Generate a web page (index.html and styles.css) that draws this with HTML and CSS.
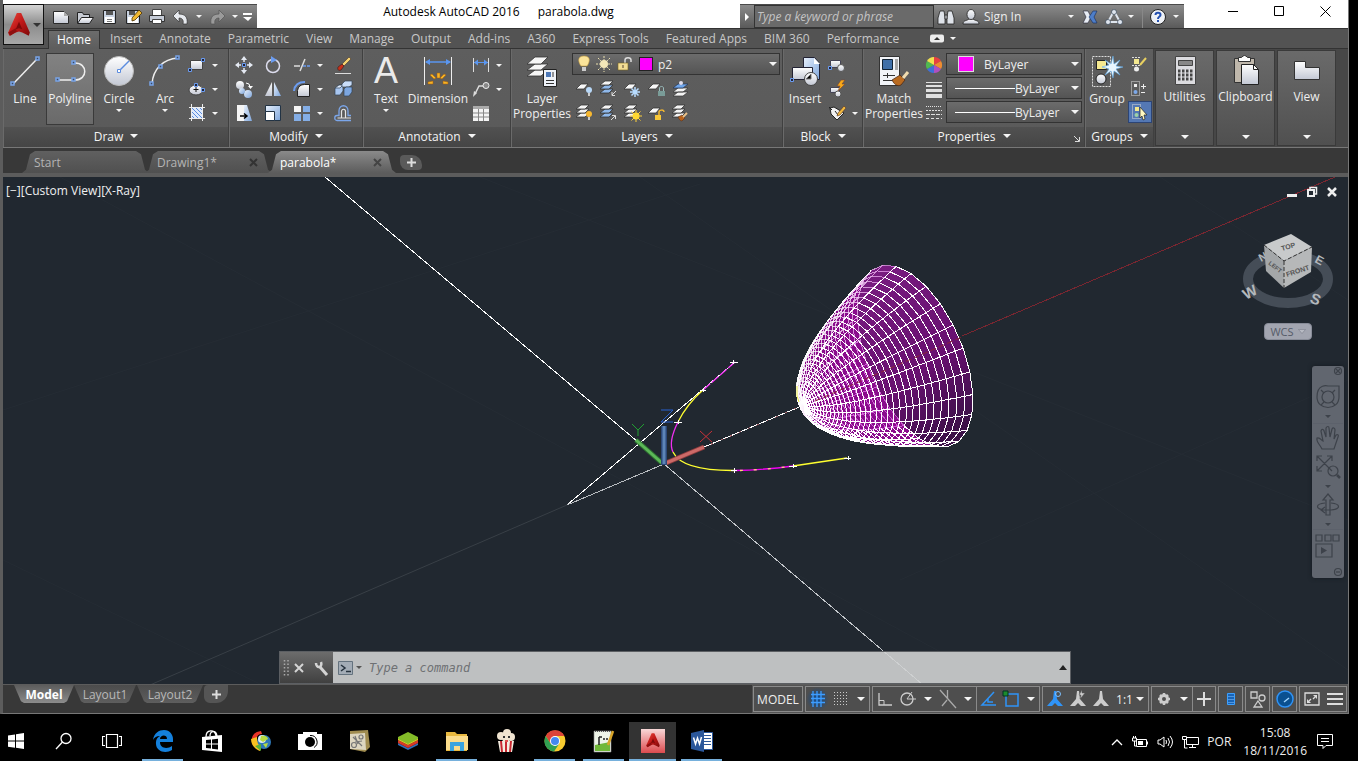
FILE: index.html
```html
<!DOCTYPE html>
<html lang="en">
<head>
<meta charset="utf-8">
<title>Autodesk AutoCAD 2016 - parabola.dwg</title>
<link rel="stylesheet" href="styles.css">
</head>
<body>
<svg class="defs" aria-hidden="true">
  <defs>
    <linearGradient id="steel" x1="0" y1="0" x2="0" y2="1"><stop offset="0" stop-color="#fff"/><stop offset="1" stop-color="#c3c8d4"/></linearGradient>
    <linearGradient id="ice" x1="0" y1="0" x2="1" y2="1"><stop offset="0" stop-color="#e8f0fb"/><stop offset="1" stop-color="#7ea6dc"/></linearGradient>
    <linearGradient id="ruby" x1="0" y1="0" x2="1" y2="1"><stop offset="0" stop-color="#e8483c"/><stop offset=".5" stop-color="#c01818"/><stop offset="1" stop-color="#7c0a0a"/></linearGradient>
    <linearGradient id="tile" x1="0" y1="0" x2="0" y2="1"><stop offset="0" stop-color="#f8d8d8"/><stop offset="1" stop-color="#dc4a4e"/></linearGradient>
    <linearGradient id="rimFill" x1=".2" y1="0" x2=".7" y2="1"><stop offset="0" stop-color="#781c80"/><stop offset=".6" stop-color="#681070"/><stop offset="1" stop-color="#3c1048"/></linearGradient>
    <linearGradient id="nearLine" gradientUnits="userSpaceOnUse" x1="825" y1="340" x2="868" y2="356"><stop offset="0" stop-color="#fff"/><stop offset="1" stop-color="#e070e6"/></linearGradient>
    <symbol id="stack" viewBox="0 0 20 20"><g fill="#f4f4f4" stroke="#333" stroke-width=".8"><path d="M1 14h9l4-4H6z"/><path d="M1 10h9l4-4H6z"/><path d="M1 6h9l4-4H6z"/></g></symbol>
    <symbol id="stackb" viewBox="0 0 20 20"><g fill="#f4f4f4" stroke="#333" stroke-width=".8"><path fill="#8fb8ea" d="M1 14h9l4-4H6z"/><path fill="#8fb8ea" d="M1 10h9l4-4H6z"/><path d="M1 6h9l4-4H6z"/></g></symbol>
    <symbol id="sheet" viewBox="0 0 20 20"><path fill="#f8f8f8" stroke="#333" stroke-width=".8" d="M1 10h8l4-5H6z"/></symbol>
    <symbol id="amark" viewBox="0 0 24 24"><path fill="url(#ruby)" d="M10 1h4l8 18-1 3-6-3-3-1-3 1-6 3-1-3z"/><path fill="#7c0a0a" d="M12 9l3 7-3-1-3 1z"/><path fill="#8e1010" d="M2 19l7-4 1 3-6 4z"/></symbol>
    <symbol id="figure" viewBox="0 0 20 20"><path d="M9 2h2l1 8 6 7h-5l-3-3-3 3H2l6-7z"/></symbol>
  </defs>
</svg>

<div class="window">
  <header class="titlebar">
    <button class="appbtn" aria-label="Application menu"><svg width="26" height="28" viewBox="0 0 24 24"><use href="#amark"/></svg><i class="arr dark"></i></button>
    <div class="quick">
      <button aria-label="New"><svg width="20" height="20" viewBox="0 0 20 20"><path fill="url(#steel)" stroke="#2a2a2a" d="M2.500 4.500h11l4 4v8h-15z"/><path fill="#aaa" d="M13 4v5h5z"/></svg></button>
      <button aria-label="Open"><svg width="20" height="20" viewBox="0 0 20 20"><path fill="#c8ccd4" stroke="#222" d="M2.500 16V5.500h5l1 2h6V10"/><path fill="url(#steel)" stroke="#222" d="M2.500 16.500l4-6h12l-4 6z"/></svg></button>
      <button aria-label="Save"><svg width="20" height="20" viewBox="0 0 20 20"><path fill="#c9d3e2" stroke="#222" d="M4.500 3.500h12v13h-12z"/><path fill="#555" d="M7 4h7v4H7z"/><path fill="#fff" d="M6 10h9v6H6z"/><path fill="#777" d="M8 12h5v1H8zM8 14h5v1H8z"/></svg></button>
      <button aria-label="Save as"><svg width="20" height="20" viewBox="0 0 20 20"><path fill="#c9d3e2" stroke="#222" d="M3.500 3.500h13v13h-13z"/><path fill="#555" d="M6 4h6v4H6z"/><path fill="#fff" d="M5 10h10v6H5z"/><path fill="#f0b830" stroke="#4a3000" stroke-width=".8" d="M16 3l3 3-7 7-3 1 0-3z"/></svg></button>
      <button aria-label="Plot"><svg width="20" height="20" viewBox="0 0 20 20"><path fill="#fff" stroke="#444" d="M5.500 2.500h9v6h-9z"/><path fill="#c5cbd6" stroke="#333" d="M2.500 8.500h15v6h-15z"/><path fill="#fff" stroke="#444" d="M5.500 12.500h9v4h-9z"/></svg></button>
      <button aria-label="Undo"><svg width="20" height="20" viewBox="0 0 20 20"><path fill="#e6e9ee" stroke="#333" stroke-width=".7" d="M2 9l6-6v4c6 0 9 3 8 10h-4c1-4-1-6-4-6v4z"/></svg></button>
      <button class="slim" aria-label="Undo list"><i class="arr"></i></button>
      <button aria-label="Redo"><svg width="20" height="20" viewBox="0 0 20 20"><path fill="#9a9a9a" stroke="#555" stroke-width=".7" d="M18 9l-6-6v4c-6 0-9 3-8 10h4c-1-4 1-6 4-6v4z"/></svg></button>
      <button class="slim" aria-label="Redo list"><i class="arr"></i></button>
      <button class="slim" aria-label="Customize"><svg width="12" height="12" viewBox="0 0 12 12"><path fill="#fff" d="M2 2h9v2H2zM2 6h9l-4 4z"/></svg></button>
    </div>
    <h1 class="title"><span>Autodesk AutoCAD 2016</span><span>parabola.dwg</span></h1>
    <div class="info">
      <button class="tiny" aria-label="Collapse search"><svg width="6" height="8" viewBox="0 0 6 8"><path fill="#fff" d="M1 0l4 4-4 4z"/></svg></button>
      <input class="search" type="text" placeholder="Type a keyword or phrase" aria-label="Search">
      <button class="w24" aria-label="Find"><svg width="20" height="20" viewBox="0 0 20 20"><g fill="#dfe3ea" stroke="#222" stroke-width=".8"><path d="M4 4h4l1 6v7H2v-6z"/><path d="M12 4h4l2 7v6h-7v-7z"/><path d="M9 8h2v4H9z"/></g></svg></button>
      <button class="signin"><svg width="18" height="20" viewBox="0 0 18 20"><g fill="url(#steel)" stroke="#222" stroke-width=".8"><path d="M1 17c0-4 4-3 6-5h4c2 2 6 1 6 5z"/><ellipse cx="9" cy="7.500" rx="4" ry="5"/></g></svg><span>Sign In</span><i class="arr"></i></button>
      <button class="w24" aria-label="Exchange"><svg width="20" height="20" viewBox="0 0 20 20"><path fill="#e8edf5" stroke="#223" stroke-width=".6" d="M3 4h5l3 6-3 6H3l3-6z"/><path fill="#4e7ec8" stroke="#122a5a" stroke-width=".6" d="M17 4h-4l-4 6 4 6h4l-3-6z"/></svg></button>
      <button class="a360" aria-label="Autodesk 360"><svg width="20" height="20" viewBox="0 0 20 20"><path fill="none" stroke="#dfe5ee" stroke-width="2" d="M10 4L4 15h12z"/><g fill="#dfe5ee" stroke="#234" stroke-width=".6"><circle cx="10" cy="5" r="2.500"/><circle cx="4" cy="15" r="2.500"/><circle cx="16" cy="15" r="2.500"/></g></svg><i class="arr"></i></button>
      <button class="help" aria-label="Help"><svg width="18" height="18" viewBox="0 0 18 18"><circle cx="9" cy="9" r="7.500" fill="#eef1f6" stroke="#222"/><path fill="none" stroke="#2450b0" stroke-width="2" d="M6.500 7c0-3 5-3 5 0 0 1.500-2.500 1.500-2.500 4"/><path fill="#2450b0" d="M8 12h2v2H8z"/></svg><i class="arr"></i></button>
    </div>
    <div class="winctl">
      <button aria-label="Minimize"><svg width="11" height="11" viewBox="0 0 11 11"><path stroke="#000" d="M0 5.500h10"/></svg></button>
      <button aria-label="Maximize"><svg width="11" height="11" viewBox="0 0 11 11"><path fill="none" stroke="#000" d="M.5.5h9v9h-9z"/></svg></button>
      <button aria-label="Close"><svg width="11" height="11" viewBox="0 0 11 11"><path stroke="#000" d="M.5.5l10 10M10.500.5l-10 10"/></svg></button>
    </div>
  </header>

  <nav class="tabs">
    <a class="on" href="#">Home</a><a href="#">Insert</a><a href="#">Annotate</a><a href="#">Parametric</a><a href="#">View</a><a href="#">Manage</a><a href="#">Output</a><a href="#">Add-ins</a><a href="#">A360</a><a href="#">Express Tools</a><a href="#">Featured Apps</a><a href="#">BIM 360</a><a href="#">Performance</a>
    <button class="minrib" aria-label="Minimize ribbon"><svg width="14" height="9" viewBox="0 0 14 9"><rect width="14" height="8" y=".5" rx="2" fill="#eee"/><path fill="#333" d="M4 6l3-3 3 3z"/></svg><i class="arr"></i></button>
  </nav>

  <div class="ribbon">
    <section class="panel p-draw">
      <div class="tools">
        <button class="big w42"><svg width="32" height="32" viewBox="0 0 32 32"><path stroke="#eee" stroke-width="1.500" d="M4 29L28 4"/><g fill="#3c4a60" stroke="#78a4e8" stroke-width="1.500"><path d="M2 27h3v3H2zM27 2h3v3h-3z"/></g></svg>Line</button>
        <button class="big w48 on"><svg width="32" height="32" viewBox="0 0 32 32"><path fill="none" stroke="#eee" stroke-width="1.500" d="M3 25h18c13 0 13-17 0-17"/><g fill="#3c4a60" stroke="#78a4e8" stroke-width="1.500"><path d="M2 23h3v3H2zM18 23h3v3h-3zM18 6h3v3h-3z"/></g></svg>Polyline</button>
        <button class="big w50"><svg width="32" height="32" viewBox="0 0 32 32"><circle cx="16" cy="16" r="14.500" fill="url(#steel)" stroke="#bbb"/><path stroke="#5a8ce0" stroke-width="1.500" d="M16 16L26 6"/><path fill="#fff" stroke="#5a8ce0" d="M14.500 14.500h3v3h-3z"/></svg>Circle<i class="arr"></i></button>
        <button class="big w42"><svg width="32" height="32" viewBox="0 0 32 32"><path fill="none" stroke="#eee" stroke-width="1.500" d="M3 29C4 14 14 4 29 3"/><g fill="#3c4a60" stroke="#78a4e8" stroke-width="1.500"><path d="M1 27h3v3H1zM10 10h3v3h-3zM27 1h3v3h-3z"/></g></svg>Arc<i class="arr"></i></button>
        <div class="col">
          <button class="sm dd" aria-label="Rectangle"><svg width="20" height="20" viewBox="0 0 20 20"><path fill="url(#steel)" stroke="#444" d="M3.500 5.500h12v9h-12z"/><path fill="#223" stroke="#6b9cf0" d="M1.500 13.500h3v3h-3zM14.500 3.500h3v3h-3z"/></svg><i class="arr"></i></button>
          <button class="sm dd" aria-label="Ellipse"><svg width="20" height="20" viewBox="0 0 20 20"><ellipse cx="9" cy="11" rx="7" ry="5" fill="url(#steel)" stroke="#444"/><path stroke="#111" d="M9 8v5M6.500 10.500h5"/><path fill="#223" stroke="#6b9cf0" d="M7.500 4.500h3v3h-3zM14.500 9.500h3v3h-3z"/></svg><i class="arr"></i></button>
          <button class="sm dd" aria-label="Hatch"><svg width="20" height="20" viewBox="0 0 20 20"><path fill="#dfeafc" d="M4 4h11v11H4z"/><path stroke="#5a8cdc" d="M4 8l7 7M4 4l11 11M8 4l7 7M4 12l3 3M12 4l3 3"/><path stroke="#eee" fill="none" d="M4.500 1v17M15.500 1v17M2 4.500h16M2 15.500h16"/></svg><i class="arr"></i></button>
        </div>
      </div>
      <button class="foot">Draw<i class="arr lg"></i></button>
    </section>

    <section class="panel p-modify">
      <div class="tools">
        <div class="grid4">
          <button class="sm" aria-label="Move"><svg width="20" height="20" viewBox="0 0 20 20"><path fill="#e4e9f2" d="M10 1l3 4H7zM10 19l3-4H7zM1 10l4-3v6zM19 10l-4-3v6z"/><path stroke="#e4e9f2" stroke-width="1.500" d="M10 4v3M10 13v3M4 10h3M13 10h3"/><path fill="#223" stroke="#6b9cf0" d="M8.500 8.500h3v3h-3z"/></svg></button>
          <button class="sm" aria-label="Rotate"><svg width="20" height="20" viewBox="0 0 20 20"><circle cx="10" cy="11" r="6.500" fill="none" stroke="#dde" stroke-width="1.500"/><path fill="#6b9cf0" d="M8 1l6 4-6 3z"/></svg></button>
          <button class="sm dd" aria-label="Trim"><svg width="20" height="20" viewBox="0 0 20 20"><path stroke="#ddd" stroke-width="1.500" d="M2 11h6M8 16l5-12"/><path stroke="#6b9cf0" stroke-width="1.500" stroke-dasharray="3 1" d="M11 11h8"/></svg><i class="arr"></i></button>
          <button class="sm" aria-label="Erase"><svg width="20" height="20" viewBox="0 0 20 20"><path stroke="#ddd" d="M2 18.500h16"/><path fill="#f4d070" stroke="#543" stroke-width=".7" d="M9 9l7-7 2 2-7 7z"/><path fill="#c83018" stroke="#422" stroke-width=".7" d="M5 12l4-3 2 2-3 4c-2 1-4 0-3-3z"/></svg></button>
          <button class="sm" aria-label="Copy"><svg width="20" height="20" viewBox="0 0 20 20"><circle cx="6" cy="6" r="4" fill="url(#steel)"/><circle cx="14" cy="15" r="4" fill="url(#ice)"/><circle cx="8" cy="12" r="3" fill="url(#ice)"/><path fill="none" stroke="#fff" d="M12 4q4 0 4 4"/><path fill="#fff" d="M14 7h5l-2.500 3z"/></svg></button>
          <button class="sm" aria-label="Mirror"><svg width="20" height="20" viewBox="0 0 20 20"><path fill="url(#steel)" d="M9 3v14H2z"/><path fill="url(#ice)" d="M11 3v14h7z"/></svg></button>
          <button class="sm dd" aria-label="Fillet"><svg width="20" height="20" viewBox="0 0 20 20"><path fill="url(#steel)" stroke="#222" d="M5.500 17.500v-6q1-6 7-6h5v12z"/><path fill="none" stroke="#6b9cf0" stroke-width="2" d="M2 12Q3 3 13 3"/></svg><i class="arr"></i></button>
          <button class="sm" aria-label="Explode"><svg width="20" height="20" viewBox="0 0 20 20"><g stroke="#345" stroke-width=".7"><path fill="#a8c6f0" d="M2 9l4-3h4v6l-3 4H2z"/><path fill="#dce8fa" d="M2 9l4-3h4l-3 3z"/><path fill="#c8dcf8" d="M9 5l3-3h7v4l-3 2H9z"/><path fill="#7ca6e0" d="M11 10l2-2h6v5l-3 4h-5z"/></g></svg></button>
          <button class="sm" aria-label="Stretch"><svg width="20" height="20" viewBox="0 0 20 20"><path fill="#f4f4f4" d="M3 2h7v16H3z"/><path fill="url(#ice)" d="M10 2h3l5 16h-8z"/><path fill="none" stroke="#000" stroke-width="1.500" d="M6 13h6M10 10.500l3 2.500-3 2.500"/></svg></button>
          <button class="sm" aria-label="Scale"><svg width="20" height="20" viewBox="0 0 20 20"><path fill="url(#ice)" stroke="#234" d="M2.500 2.500h15v15h-15z"/><path fill="#fff" stroke="#234" d="M2.500 8.500h9v9h-9z"/></svg></button>
          <button class="sm dd" aria-label="Array"><svg width="20" height="20" viewBox="0 0 20 20"><path fill="#f4f4f4" d="M2 3h7v6H2z"/><path fill="#84aee6" d="M11 3h7v6h-7zM2 11h7v7H2zM11 11h7v7h-7z"/></svg><i class="arr"></i></button>
          <button class="sm" aria-label="Offset"><svg width="20" height="20" viewBox="0 0 20 20"><path fill="none" stroke="#7ba6ea" stroke-width="1.300" d="M18 17.500H4c-3 0-3-5 0-5h2V8c0-7 9-7 9 0v4.500h3"/><path fill="none" stroke="#e4e4e4" stroke-width="1.200" d="M18 15H4.500M8.500 15V8.500c0-3 4-3 4 0V15"/></svg></button>
        </div>
      </div>
      <button class="foot">Modify<i class="arr lg"></i></button>
    </section>

    <section class="panel p-annot">
      <div class="tools">
        <button class="big w44"><span class="glyph">A</span>Text<i class="arr"></i></button>
        <button class="big w60"><svg width="32" height="32" viewBox="0 0 32 32"><path stroke="#eee" d="M2.500 2v28M29.500 2v28"/><path stroke="#5a96f0" stroke-width="1.500" d="M4 7h24"/><path fill="#5a96f0" d="M3 7l5-3v6zM29 7l-5-3v6z"/><g fill="#f5b428" stroke="#a85a00" stroke-width=".5"><path d="M15 18h3v5h-3zM8 20l2-1 4 4-2 1zM24 20l-2-1-4 4 2 1zM6 27l5-1v3H6zM26 27l-5-1v3h5z"/></g></svg>Dimension</button>
        <div class="col">
          <button class="sm dd" aria-label="Linear"><svg width="20" height="20" viewBox="0 0 20 20"><path stroke="#ddd" d="M2.500 3v14M17.500 3v14"/><path stroke="#5a96f0" d="M3 7.500h14"/><path fill="#5a96f0" d="M3 7.500l4-3v6zM17 7.500l-4-3v6z"/></svg><i class="arr"></i></button>
          <button class="sm dd" aria-label="Leader"><svg width="20" height="20" viewBox="0 0 20 20"><path fill="none" stroke="#ddd" stroke-width="1.500" d="M4 15L8 7h5"/><path fill="#ddd" d="M2 18l1-6 3 2z"/><circle cx="15" cy="6.500" r="3" fill="#888" stroke="#eee"/></svg><i class="arr"></i></button>
          <button class="sm" aria-label="Table"><svg width="20" height="20" viewBox="0 0 20 20"><path fill="#f4f4f4" d="M2 3h16v15H2z"/><path fill="#aaa" d="M2 3h16v3H2z"/><path stroke="#888" d="M2 10h16M2 14h16M7.500 6v12M12.500 6v12"/></svg></button>
        </div>
      </div>
      <button class="foot">Annotation<i class="arr lg"></i></button>
    </section>

    <section class="panel p-layers">
      <div class="tools">
        <button class="big w60"><svg width="32" height="32" viewBox="0 0 32 32"><g fill="#f6f6f6" stroke="#333" stroke-width=".8"><path d="M1 21h14l7-6H9z"/><path d="M1 15h14l7-6H9z"/><path d="M1 9h14l7-7H9z"/></g><path fill="#eef2f8" stroke="#222" d="M17.500 14.500h13v17h-13z"/><path fill="#4c78b8" d="M20 17h5v5h-5z"/><path stroke="#333" d="M20 25.500h8M20 28.500h8M27 17v5"/></svg>Layer<br>Properties</button>
        <div class="layercol">
          <div class="combo layer">
            <svg width="14" height="18" viewBox="0 0 14 18"><path fill="#fbe49a" stroke="#c8a040" stroke-width=".6" d="M7 1c7 0 6 6 3 10H4C1 7 0 1 7 1z"/><path fill="#ccc" d="M5 12h4v4H5z"/></svg>
            <svg width="16" height="16" viewBox="0 0 16 16"><path stroke="#eadfae" stroke-dasharray="2 1" d="M8 0v16M0 8h16M2 2l12 12M14 2L2 14"/><circle cx="8" cy="8" r="4" fill="#f4e8b8"/></svg>
            <svg width="16" height="16" viewBox="0 0 16 16"><path fill="none" stroke="#ddd" stroke-width="1.500" d="M8 7V4c0-3 6-3 6 0v2"/><path fill="#f4de94" stroke="#7a6420" stroke-width=".6" d="M1 7h10v7H1z"/><path stroke="#543" d="M6 9v3"/></svg>
            <i class="swatch"></i>
            <select aria-label="Layer"><option>p2</option></select><i class="arr lg"></i>
          </div>
          <div class="grid5">
            <button class="sm" aria-label="Off"><svg width="20" height="20" viewBox="0 0 20 20"><use href="#sheet"/><circle cx="14" cy="11" r="3" fill="#b8d8f8"/><path fill="#ccc" d="M13 14h2v3h-2z"/></svg></button>
            <button class="sm" aria-label="Isolate"><svg width="20" height="20" viewBox="0 0 20 20"><use href="#stackb"/><path fill="none" stroke="#ddd" d="M17 12l-4 4M13 13v3.500h3"/></svg></button>
            <button class="sm" aria-label="Freeze"><svg width="20" height="20" viewBox="0 0 20 20"><use href="#sheet"/><path stroke="#b8dcff" stroke-width="1.500" d="M12 8v10M7 13h10M8.500 9.500l7 7M15.500 9.500l-7 7"/></svg></button>
            <button class="sm" aria-label="Lock"><svg width="20" height="20" viewBox="0 0 20 20"><use href="#sheet"/><path fill="none" stroke="#9bb" d="M12.500 12V9c0-2 4-2 4 0v3"/><path fill="#7a9c98" d="M11 12h7v5h-7z"/></svg></button>
            <button class="sm" aria-label="Make current"><svg width="20" height="20" viewBox="0 0 20 20"><path fill="#f4f4f4" stroke="#333" stroke-width=".7" d="M2 17h10l5-4H7zM2 13h10l5-4H7z"/><path fill="#6ea4e8" stroke="#235" stroke-width=".7" d="M2 9h10l5-4H7z"/><circle cx="10" cy="4" r="2" fill="#dde"/></svg></button>
            <button class="sm" aria-label="On"><svg width="20" height="20" viewBox="0 0 20 20"><use href="#stack"/><circle cx="14" cy="11" r="3" fill="#f8b830"/><path fill="#ccc" d="M13 14h2v3h-2z"/></svg></button>
            <button class="sm" aria-label="Unisolate"><svg width="20" height="20" viewBox="0 0 20 20"><use href="#stackb"/><path fill="none" stroke="#ddd" d="M12 17l4-4M13 12.500h3.500V16"/></svg></button>
            <button class="sm" aria-label="Thaw"><svg width="20" height="20" viewBox="0 0 20 20"><use href="#stack"/><path stroke="#ffd23c" d="M13 7v12M7 13h12M8.500 8.500l9 9M17.500 8.500l-9 9"/><circle cx="13" cy="13" r="3.500" fill="#ffd830"/></svg></button>
            <button class="sm" aria-label="Unlock"><svg width="20" height="20" viewBox="0 0 20 20"><use href="#sheet"/><path fill="none" stroke="#f4b830" stroke-width="1.500" d="M12 12V9c0-2 5-3 5 0"/><path fill="#f8c838" d="M8 12h6v5H8z"/></svg></button>
            <button class="sm" aria-label="Match layer"><svg width="20" height="20" viewBox="0 0 20 20"><use href="#stack"/><path fill="#b86018" stroke="#532" stroke-width=".6" d="M7 14l4-2 3 3-3 3c-2 0-3-2-4-4z"/><path stroke="#e8c088" stroke-width="2" d="M12 14l4-4"/></svg></button>
          </div>
        </div>
      </div>
      <button class="foot">Layers<i class="arr lg"></i></button>
    </section>

    <section class="panel p-block">
      <div class="tools">
        <button class="big w42"><svg width="32" height="32" viewBox="0 0 32 32"><path fill="url(#ice)" stroke="#223" d="M14.500 2.500h11l5 6v16h-16z"/><path fill="#fff" d="M25 3v6h6z"/><path fill="url(#steel)" stroke="#223" d="M3.500 12.500h20v12h-20z"/><circle cx="22" cy="24" r="6.500" fill="url(#steel)" stroke="#444"/><path stroke="#777" d="M22 19v5h-5"/><path fill="#223" stroke="#6b9cf0" d="M1.500 23.500h3v3h-3z"/></svg>Insert</button>
        <div class="col near">
          <button class="sm" aria-label="Create"><svg width="20" height="20" viewBox="0 0 20 20"><path fill="url(#steel)" stroke="#445" d="M3.500 5.500h10v7h-10z"/><circle cx="14" cy="13" r="3.500" fill="url(#steel)" stroke="#555"/><path fill="#223" stroke="#6b9cf0" d="M1.500 11.500h3v3h-3z"/></svg></button>
          <button class="sm" aria-label="Edit"><svg width="20" height="20" viewBox="0 0 20 20"><path fill="url(#steel)" stroke="#445" d="M3.500 8.500h9v5h-9z"/><circle cx="11" cy="15" r="3" fill="url(#steel)" stroke="#555"/><path fill="#f8a818" stroke="#743" stroke-width=".6" d="M14 1l-4 6h3l-2 5 7-7h-3l3-4z"/></svg></button>
          <button class="sm dd" aria-label="Attributes"><svg width="20" height="20" viewBox="0 0 20 20"><path fill="#f0f0f0" stroke="#222" d="M3 5l4-1 10 6-7 7-6-6z"/><path fill="none" stroke="#222" d="M2 4l3 3M8 8l3 4"/><path fill="#f0b840" stroke="#532" stroke-width=".6" d="M17 3l2 2-6 7-3 1 1-3z"/></svg><i class="arr"></i></button>
        </div>
      </div>
      <button class="foot">Block<i class="arr lg"></i></button>
    </section>

    <section class="panel p-props">
      <div class="tools">
        <button class="big w60"><svg width="32" height="32" viewBox="0 0 32 32"><path fill="#f2f4f8" stroke="#333" d="M1.500 1.500h20v29h-20z"/><path fill="#3f6fa8" stroke="#123" d="M4.500 4.500h10v10h-10z"/><path fill="#aaa" d="M17 4h3v11h-3z"/><path stroke="#333" d="M5 20.500h12M5 25.500h12M9.500 18v5"/><path fill="#b86a20" stroke="#421" stroke-width=".7" d="M14 25l8-5 5 5-4 5c-4 2-7-1-9-5z"/><path stroke="#f0dcb0" stroke-width="3" d="M25 23l5-6"/></svg>Match<br>Properties</button>
        <div class="col narrow">
          <button class="sm" aria-label="Colour"><svg width="18" height="18" viewBox="-9 -9 18 18"><path fill="#e84040" d="M0 0V-8A8 8 0 0 1 7-4z"/><path fill="#f08c30" d="M0 0L7-4A8 8 0 0 1 7 4z"/><path fill="#b050c0" d="M0 0L7 4A8 8 0 0 1 0 8z"/><path fill="#3f70d8" d="M0 0V8A8 8 0 0 1-7 4z"/><path fill="#50b850" d="M0 0L-7 4A8 8 0 0 1-7-4z"/><path fill="#f0e050" d="M0 0L-7-4A8 8 0 0 1 0-8z"/></svg></button>
          <button class="sm" aria-label="Lineweight"><svg width="18" height="18" viewBox="0 0 18 18"><path fill="#e0e0e0" d="M1 2h16v1H1zM1 5h16v2H1zM1 9h16v3H1zM1 14h16v4H1z"/></svg></button>
          <button class="sm" aria-label="Linetype"><svg width="18" height="18" viewBox="0 0 18 18"><g stroke="#e0e0e0"><path stroke-dasharray="1 1" d="M1 2.500h16"/><path stroke-dasharray="2 1" d="M1 6.500h16"/><path stroke-dasharray="4 1" d="M1 10.500h16"/><path stroke-dasharray="3 2" d="M1 14.500h16"/></g></svg></button>
        </div>
        <div class="combos">
          <div class="combo"><i class="swatch big-sw"></i><select aria-label="Object colour"><option>ByLayer</option></select><i class="arr lg"></i></div>
          <div class="combo"><i class="rule"></i><select aria-label="Lineweight"><option>ByLayer</option></select><i class="arr lg"></i></div>
          <div class="combo"><i class="rule"></i><select aria-label="Linetype"><option>ByLayer</option></select><i class="arr lg"></i></div>
        </div>
      </div>
      <button class="foot">Properties<i class="arr lg"></i><svg class="launch" width="7" height="7" viewBox="0 0 7 7"><path stroke="#ddd" fill="none" d="M1 1l5 5M6.500 2v4.500H2"/></svg></button>
    </section>

    <section class="panel p-groups">
      <div class="tools">
        <button class="big w42"><svg width="32" height="32" viewBox="0 0 32 32"><path fill="none" stroke="#ddd" stroke-dasharray="2 1" d="M1.500 1.500h18v30h-18z"/><path fill="#f4e890" stroke="#222" d="M5.500 5.500h10v9h-10z"/><circle cx="10" cy="24" r="5" fill="url(#steel)" stroke="#222"/><path fill="#e8f6ff" stroke="#5aa8e8" stroke-width=".6" d="M22 1l1 8 6-4-4 6 7 1-7 2 4 6-6-4-1 7-2-7-6 4 4-6-7-2 7-2-4-5 6 4z"/></svg>Group</button>
        <div class="col tiny-col">
          <button class="sm" aria-label="Group edit"><svg width="20" height="20" viewBox="0 0 20 20"><path stroke="#ddd" stroke-dasharray="2 1" d="M3 2.500h8M3 10.500h8"/><path fill="#f4e890" d="M5 4h5v5H5z"/><circle cx="7.500" cy="14" r="2.500" fill="#eee"/><path stroke="#e8d060" stroke-width="2" d="M11 10l6-7"/></svg></button>
          <button class="sm" aria-label="Ungroup"><svg width="20" height="20" viewBox="0 0 20 20"><path fill="none" stroke="#ddd" stroke-dasharray="1 1" d="M2.500 2.500h8v14h-8z"/><path fill="#eee" d="M5 5h3v3H5z"/><circle cx="6.500" cy="13" r="2" fill="#7ca8e8"/><path stroke="#eee" d="M12 7.500h5M14.500 5v5M12 13.500h4"/></svg></button>
          <button class="sm sel" aria-label="Group selection"><svg width="20" height="20" viewBox="0 0 20 20"><path fill="none" stroke="#ddd" stroke-dasharray="1 1" d="M2.500 2.500h8v14h-8z"/><path fill="#f4e890" d="M5 5h4v4H5z"/><circle cx="6.500" cy="13" r="2" fill="#9cd0a8"/><path fill="#fff8c0" stroke="#222" stroke-width=".7" d="M10 5l7 8h-3l1 4-2 1-1-4-2 2z"/></svg></button>
        </div>
      </div>
      <button class="foot">Groups<i class="arr lg"></i></button>
    </section>

    <button class="closed"><svg width="32" height="32" viewBox="0 0 32 32"><path fill="#dcdce0" stroke="#444" d="M6.500 2.500h20v28h-20z"/><path fill="#888" stroke="#444" d="M9.500 6.500h14v5h-14z"/><path stroke="#444" stroke-width="3" stroke-dasharray="2.500 1.500" d="M9 17h15M9 21h15M9 25h15"/></svg>Utilities<i class="arr lg"></i></button>
    <button class="closed"><svg width="32" height="32" viewBox="0 0 32 32"><path fill="#c0b8ac" stroke="#333" d="M4.500 4.500h20v24h-20z"/><path fill="#fff" stroke="#333" d="M8.500 3.500h3q3-4 6 0h3v4h-12z"/><path fill="url(#steel)" stroke="#222" d="M11.500 10.500h12l5 5v15h-17z"/><path fill="#fff" stroke="#222" d="M23.500 10.500v5h5z"/></svg>Clipboard<i class="arr lg"></i></button>
    <button class="closed"><svg width="32" height="32" viewBox="0 0 32 32"><path fill="url(#steel)" stroke="#333" d="M3.500 7.500h11v6h14v12h-25z"/></svg>View<i class="arr lg"></i></button>
  </div>

  <div class="filetabs">
    <button class="ftab"><span>Start</span></button>
    <button class="ftab"><span>Drawing1*</span><svg width="9" height="9" viewBox="0 0 9 9"><path stroke="#333" stroke-width="2" d="M1 1l7 7M8 1L1 8"/></svg></button>
    <button class="ftab on"><span>parabola*</span><svg width="9" height="9" viewBox="0 0 9 9"><path stroke="#444" stroke-width="2" d="M1 1l7 7M8 1L1 8"/></svg></button>
    <button class="fplus" aria-label="New drawing"><svg width="9" height="9" viewBox="0 0 9 9"><path stroke="#ddd" stroke-width="2" d="M4.500 0v9M0 4.500h9"/></svg></button>
  </div>

  <main class="canvas">
    <svg class="scene" viewBox="3 177 1345 507" preserveAspectRatio="xMidYMid slice">
      <g stroke="#252c34" fill="none"><path d="M3 410L700 184M60 177L1000 684M480 177L1348 520M3 560L260 684M640 177L1348 670M1348 380L900 580M1160 177L1348 300"/></g>
      <path stroke="#383f46" d="M567 505L150 685"/>
      <g fill="none" shape-rendering="crispEdges">
        <path stroke="#7a2630" d="M962 336L1335 177"/>
        <path stroke="#fff" d="M325 177L664 464"/>
        <path stroke="#c4c8cc" d="M664 464L922 684"/>
        <path stroke="#fff" d="M567 505L735 362"/>
        <path stroke="#b8bcc0" d="M567 505L664 464"/>
        <path stroke="#a86a70" d="M664 464L804 405"/>
        <path stroke="#fff" stroke-dasharray="8 2" d="M704 447L804 405"/>
      </g>
      <g fill="none" stroke-width="1.300">
        <path stroke="#f030f0" stroke-dasharray="9 2" d="M735 362L703 390"/>
        <path stroke="#ffff30" d="M703 390Q687 404 678 422"/>
        <path stroke="#f030f0" d="M678 422Q668 442 673 452"/>
        <path stroke="#ffff30" d="M673 452Q682 471 735 470.500"/>
        <path stroke="#f000f0" d="M735 470.500Q764 470 793 466"/>
        <path stroke="#ffd080" stroke-dasharray="3 11" d="M740 470.500Q764 470 793 466"/>
        <path stroke="#ffff30" d="M793 466L847 458"/>
      </g>
      <path stroke="#fff" fill="none" shape-rendering="crispEdges" d="M730 362.500h8M733.500 360v4M700 390.500h6M703.500 388v4M674 422.500h8M678.500 420v4M731 470.500h6M734.500 468v5M789 466.500h8M793.500 464v4M844 458.500h7M848.500 456v4"/>
      <g id="mesh" fill="none" shape-rendering="crispEdges"></g>
      <path stroke="#8c2438" stroke-dasharray="6 3" d="M815 401L962 337"/>
      <path stroke="#e8e840" fill="none" d="M797 386v10l2 6"/>
      <g stroke-linecap="butt">
        <path stroke="#2c7030" stroke-width="5" d="M662 463L636 440"/><path stroke="#5cb858" stroke-width="3" d="M662 463L636 440"/>
        <path stroke="#8c3c3e" stroke-width="5" d="M666 463L704 447"/><path stroke="#cc6a68" stroke-width="3" d="M666 463L704 447"/>
        <path stroke="#2c4878" stroke-width="6" d="M664 465V426"/><path stroke="#5c84b8" stroke-width="3" d="M664 464V426"/>
      </g>
      <g fill="none">
        <path stroke="#20a030" d="M632 424l6 6 6-6M638 430v6"/>
        <path stroke="#c83038" d="M700 431l12 11M712 431l-12 11"/>
        <path stroke="#2860d0" d="M661 410h12l-12 12h12"/>
      </g>
    </svg>
    <div class="viewlabel"><button>[−]</button><button>[Custom View]</button><button>[X-Ray]</button></div>
    <div class="docctl">
      <button aria-label="Minimize drawing"><svg width="12" height="12" viewBox="0 0 12 12"><path fill="#eee" d="M1 8h10v3H1z"/></svg></button>
      <button aria-label="Restore drawing"><svg width="12" height="12" viewBox="0 0 12 12"><path fill="none" stroke="#eee" stroke-width="1.500" d="M4 3V1.500h6.500V8H9"/><path fill="none" stroke="#eee" stroke-width="2" d="M2 4h6v6H2z"/></svg></button>
      <button aria-label="Close drawing"><svg width="12" height="12" viewBox="0 0 12 12"><path stroke="#eee" stroke-width="2.500" d="M2 2l8 8M10 2l-8 8"/></svg></button>
    </div>
    <div class="cube">
      <svg width="108" height="84" viewBox="1234 230 108 84">
        <ellipse cx="1288" cy="279" rx="40" ry="24" fill="none" stroke="#454d57" stroke-width="10"/>
        <g fill="#b4b8bc" font-family="Liberation Sans, sans-serif" font-weight="bold" font-size="15">
          <text transform="translate(1246 300) rotate(-28)">W</text><text transform="translate(1309 302) rotate(22)">S</text><text font-size="12" transform="translate(1314 262) rotate(28)">E</text><text font-size="11" transform="translate(1261 262) rotate(-28)">N</text>
        </g>
        <path fill="#c8cacb" d="M1264 245l27-11 21 13-28 14z"/><path fill="#a4a7a9" d="M1264 245l20 16v27l-18-17z"/><path fill="#b6b8b9" d="M1284 261l28-14-1 25-27 16z"/>
        <path fill="none" stroke="#333" stroke-dasharray="4 2" d="M1264 245l20 16 28-14M1284 261v27"/>
        <g fill="#555" font-family="Liberation Sans, sans-serif" font-weight="bold" font-size="7">
          <text transform="translate(1282 251) rotate(-16)">TOP</text><text transform="translate(1287 277) rotate(-18)">FRONT</text><text font-size="6" transform="translate(1268 264) rotate(38)">LEFT</text>
        </g>
      </svg>
      <button class="wcs">WCS<svg width="8" height="5" viewBox="0 0 8 5"><path fill="#b8bbc4" stroke="#737783" stroke-width=".5" d="M.5.5h7L4 4.500z"/></svg></button>
    </div>
    <div class="navbar">
      <svg width="32" height="212" viewBox="0 0 32 212"><g fill="none" stroke="#3d424a" stroke-width="1.200">
        <circle cx="26" cy="5" r="3.500"/><path d="M24 3l4 4M28 3l-4 4"/>
        <path d="M16 20h11v11c0 14-22 14-22 0s11-11 11-11z"/><circle cx="16" cy="31" r="6"/><path d="M9 24l3 3M23 24l-3 3M12 36l-3 3M20 36l3 3"/>
        <path d="M10 83C7 77 4 76 5 72c3-1 4 2 6 3L9 65c1-3 3-1 3 0l2 6V62c1-2 3-2 3 0l1 9 2-8c1-2 3-1 3 1l-1 9 2-4c2-1 3 0 2 2l-4 12z"/>
        <path d="M5 90l15 15M20 90L5 105M5 95v-5h5M15 90h5v5M5 100v5h5"/><circle cx="21" cy="105" r="5"/><path d="M25 109l3 3" stroke-width="2.500"/>
        <path d="M14 149v-15h-3l5-6 5 6h-3v15z"/><path d="M13 137c-10 1-10 6 0 7M19 137c10 1 10 6 0 7h-8M13 141l-4 3 4 3"/>
        <path d="M4 169h6v6H4zM13 169h6v6h-6zM21 169h6v6h-6zM4 178h16v13H4z"/><circle cx="26" cy="206" r="3.500"/><path d="M24 206h4"/></g>
        <g fill="#3d424a"><path d="M13 49h6l-3 3zM13 119h6l-3 3zM13 157h6l-3 3zM9 181v7l6-3.500z"/></g><path stroke="#5c616b" d="M1 57.500h30M1 163.500h30"/></svg>
    </div>
    <form class="cmd">
      <div class="cmdgrip"><svg width="50" height="24" viewBox="0 0 50 24"><path stroke="#aaa" stroke-width="1.500" stroke-dasharray="1.500 2" d="M4.500 4v17M8 4v17"/><path stroke="#d4d4d4" stroke-width="2" d="M15 8l8 8M23 8l-8 8"/><path stroke="#d4d4d4" stroke-width="3" d="M40 11l7 8"/><path fill="none" stroke="#d4d4d4" stroke-width="2.500" d="M36 7c0 6 7 5 5-1"/></svg></div>
      <label for="cmd" class="prompt"><svg width="24" height="16" viewBox="0 0 24 16"><path fill="#a3acb6" stroke="#64727e" d="M.5 1.500h14v13H.5z"/><path fill="none" stroke="#26323e" stroke-width="1.500" d="M3 5l4 3-4 3M8 11.500h5"/><path fill="#555" d="M18 6h6l-3 3z"/></svg></label>
      <input id="cmd" type="text" placeholder="Type a command">
      <button type="button" aria-label="History"><svg width="8" height="5" viewBox="0 0 8 5"><path fill="#222" d="M0 5l4-5 4 5z"/></svg></button>
    </form>
  </main>

  <footer class="status">
    <div class="layouts">
      <button class="ltab on">Model</button><button class="ltab">Layout1</button><button class="ltab">Layout2</button>
      <button class="lplus" aria-label="New layout"><svg width="9" height="9" viewBox="0 0 9 9"><path stroke="#ddd" stroke-width="2" d="M4.500 0v9M0 4.500h9"/></svg></button>
    </div>
    <div class="sbar">
      <div class="box"><button class="model">MODEL</button></div>
      <div class="box"><button class="ico glow" aria-label="Grid"><svg width="18" height="18" viewBox="0 0 18 18"><path stroke="#3c9cff" stroke-width="1.300" d="M4 1v16M8 1v16M12 1v16M2 4.500h14M2 8.500h14M2 12.500h14"/></svg></button><button class="ico" aria-label="Snap"><svg width="18" height="18" viewBox="0 0 18 18"><path stroke="#ccc" stroke-dasharray="1 2" d="M2 2.500h15M2 5.500h15M2 8.500h15M2 11.500h15M2 14.500h15"/></svg></button><button class="drop" aria-label="Snap options"><i class="arr lg"></i></button></div>
      <div class="box"><button class="ico" aria-label="Ortho"><svg width="18" height="18" viewBox="0 0 18 18"><path fill="none" stroke="#ccc" stroke-width="1.300" d="M3 3v12h13"/><path fill="none" stroke="#ccc" d="M3 10.500h5V15"/></svg></button><button class="ico" aria-label="Polar"><svg width="18" height="18" viewBox="0 0 18 18"><circle cx="8" cy="9" r="6" fill="none" stroke="#ccc" stroke-width="1.300"/><path stroke="#ccc" d="M8 9l5-7M8 9h9"/></svg></button><button class="drop" aria-label="Polar options"><i class="arr lg"></i></button><button class="ico" aria-label="Isodraft"><svg width="20" height="20" viewBox="0 0 20 20"><path stroke="#aaa" stroke-width="1.300" d="M2 1l16 18M9.500 1v8M9 11l-5 6"/></svg></button><button class="drop" aria-label="Isodraft options"><i class="arr lg"></i></button><button class="ico div" aria-label="Tracking"><svg width="18" height="18" viewBox="0 0 18 18"><path fill="none" stroke="#2f94f8" stroke-width="1.500" d="M15 2L3 15h14M9 8v4h5"/></svg></button><button class="ico" aria-label="Object snap"><svg width="18" height="18" viewBox="0 0 18 18"><path fill="none" stroke="#2f94f8" stroke-width="1.500" d="M4 4h12v12H4z"/><path fill="#1c8c2c" stroke="#032" d="M1 1h5v5H1z"/></svg></button><button class="drop" aria-label="Snap modes"><i class="arr lg"></i></button></div>
      <div class="box"><button class="ico" aria-label="Annotation visibility"><svg width="20" height="20" viewBox="0 0 20 20" fill="#2f94f8"><use href="#figure"/><circle cx="13" cy="5" r="2.500" fill="none" stroke="#7cc0ff"/></svg></button><button class="ico" aria-label="Autoscale"><svg width="20" height="20" viewBox="0 0 20 20" fill="#ccc"><use href="#figure"/><path d="M14 1l-3 5h2l-1 4 5-6h-3z" stroke="#555" stroke-width=".5"/></svg></button><button class="ico" aria-label="Annotation scale"><svg width="20" height="20" viewBox="0 0 20 20" fill="#ccc"><use href="#figure"/></svg></button><button class="scale">1:1<i class="arr lg"></i></button></div>
      <div class="box"><button class="ico" aria-label="Workspace"><svg width="18" height="18" viewBox="0 0 18 18"><circle cx="9" cy="9" r="3.500" fill="none" stroke="#ccc" stroke-width="3"/><path stroke="#ccc" stroke-width="2.500" d="M9 3v2M9 13v2M3 9h2M13 9h2M5 5l1 1M12 12l1 1M13 5l-1 1M5 13l1-1"/></svg></button><button class="drop" aria-label="Workspaces"><i class="arr lg"></i></button><button class="ico div" aria-label="Monitor"><svg width="16" height="16" viewBox="0 0 16 16"><path stroke="#ddd" stroke-width="2" d="M8 1v14M1 8h14"/></svg></button></div>
      <div class="box"><button class="ico" aria-label="Quick properties"><svg width="16" height="16" viewBox="0 0 16 16"><path fill="#1864b8" stroke="#3ca0ff" d="M4.500 2.500h7v11h-7z"/><path stroke="#8cc8ff" stroke-dasharray="1 1" d="M5.500 5.500h6M5.500 8.500h6M5.500 11.500h6"/></svg></button></div>
      <div class="box"><button class="ico" aria-label="Isolate objects"><svg width="18" height="18" viewBox="0 0 18 18"><g fill="none" stroke="#ccc" stroke-width="1.300"><path d="M2 2h6v6H2zM9 11l4 6H5z"/><circle cx="13" cy="8" r="3"/></g></svg></button></div>
      <div class="box"><button class="ico" aria-label="Hardware"><svg width="20" height="20" viewBox="0 0 20 20"><circle cx="10" cy="10" r="8" fill="#0a5090" stroke="#2f94f8" stroke-width="1.500"/><path stroke="#a0d4ff" stroke-width="1.500" d="M9 13l5-4"/></svg></button></div>
      <div class="box"><button class="ico" aria-label="Clean screen"><svg width="18" height="18" viewBox="0 0 18 18"><path fill="none" stroke="#ddd" stroke-width="1.300" d="M2 3h14v12H2z"/><path stroke="#ddd" stroke-width="1.300" d="M6 11l2-2M10 9l2-2"/><path fill="#ddd" d="M4 9v4h4zM14 9V5h-4z"/></svg></button><button class="ico" aria-label="Menu"><svg width="16" height="16" viewBox="0 0 16 16"><path stroke="#ddd" stroke-width="2" d="M0 3h16M0 8h16M0 13h16"/></svg></button></div>
    </div>
  </footer>
</div>

<div class="taskbar">
  <div class="apps">
    <button class="start" aria-label="Start"><svg width="16" height="16" viewBox="0 0 16 16"><path fill="#fff" d="M0 2.500l7-1V7.500H0zM8 1.300L16 0v7.500H8zM0 8.500h7v6.200l-7-1zM8 8.500h8V16l-8-1.200z"/></svg></button>
    <button class="t48" aria-label="Search"><svg width="18" height="18" viewBox="0 0 18 18"><circle cx="11" cy="6.500" r="5" fill="none" stroke="#fff" stroke-width="1.300"/><path stroke="#fff" stroke-width="1.300" d="M7.500 10L1 17"/></svg></button>
    <button class="t48 last" aria-label="Task view"><svg width="20" height="16" viewBox="0 0 20 16"><path fill="none" stroke="#fff" stroke-width="1.200" d="M4.500 1.500h11v13h-11zM3 3.500H.5v9H3M17 3.500h2.500v9H17"/></svg></button>
    <button class="run" aria-label="Edge"><svg width="22" height="22" viewBox="0 0 22 22"><path fill="#1480dc" fill-rule="evenodd" d="M1 10C2 3 7 0 12 0c6 0 9 5 9 9v3H8c0 7 8 7 12 4v4c-6 4-17 2-16-8 0-3 2-5 4-6-4 0-6 2-7 4zm7-1h7c0-5-7-4-7 0z"/></svg></button>
    <button aria-label="Store"><svg width="22" height="24" viewBox="0 0 22 24"><path fill="#fff" d="M1 8l20-2v17L1 21z"/><path fill="none" stroke="#fff" stroke-width="1.300" d="M5 8c0-8 9-8 10-1M9 7c0-6 6-6 7 0"/><path fill="#000" d="M5 11l5-.5v4H5zM11 10.400l6-.6v4.700h-6zM5 15.500h5v4l-5-.5zM11 15.500h6v5l-6-.8z"/></svg></button>
    <button aria-label="Globe"><svg width="22" height="22" viewBox="0 0 22 22"><circle cx="14" cy="12" r="7" fill="#2e78b8"/><circle cx="12" cy="9" r="4" fill="#d8ecf8"/><path fill="#b8dc40" d="M11 6c4-1 7 1 7 3l-5 3-3-2zM13 14l5-1-2 5z"/><path fill="#e83428" d="M11 1C3 2 0 8 3 13l4-3C6 7 8 4 12 4z"/><path fill="#f8c020" d="M1 9l6-2c0 5 1 8 4 10l-1 4C4 19 1 14 1 9z"/><path fill="#58b038" d="M5 16l6-2v7z"/></svg></button>
    <button aria-label="Camera"><svg width="26" height="22" viewBox="0 0 26 22"><path fill="#fff" d="M1 4h5V2h14v2h5v16H1z"/><circle cx="13" cy="12" r="5" fill="#000"/><path fill="none" stroke="#000" d="M13 5.500a6.500 6.500 0 0 1 4 12"/></svg></button>
    <button aria-label="Dice"><svg width="24" height="24" viewBox="0 0 24 24"><path fill="#a08c50" d="M3 2l18-1 2 17-5 5-15-3z"/><path fill="#ddd6c0" d="M3 5l15-1 1 17-16-1z"/><g fill="none" stroke="#777" stroke-width="1.200"><circle cx="7" cy="16" r="2.500"/><circle cx="14" cy="8" r="2"/><path d="M6 8l9 9M15 12l-7 1M8 7l3 8"/></g></svg></button>
    <button aria-label="BlueStacks"><svg width="22" height="20" viewBox="0 0 22 20"><path fill="#2e6cb8" d="M1 12l10 5 10-5v2l-10 5L1 14z"/><path fill="#d83828" d="M1 9l10 5 10-5v3l-10 5-10-5z"/><path fill="#f4c428" d="M1 7l10 5 10-5v2l-10 5L1 9z"/><path fill="#84bc28" d="M11 1l10 5v2l-10 5L1 8V6z"/></svg></button>
    <button class="run" aria-label="Explorer"><svg width="24" height="22" viewBox="0 0 24 22"><path fill="#e8b840" d="M1 2h9l2 2h10v17H1z"/><path fill="#fbdc8c" d="M1 6h22v14H1z"/><path fill="#3aa4e0" d="M5 12h14v9h-4v-5H9v5H5z"/></svg></button>
    <button aria-label="Popcorn"><svg width="20" height="24" viewBox="0 0 20 24"><path fill="#f4ece0" d="M2 12L4 23h12l2-11z"/><path stroke="#c82830" stroke-width="2" d="M5 12l1 11M10 12v11M15 12l-1 11"/><g fill="#f0e4d0"><circle cx="5" cy="7" r="4"/><circle cx="11" cy="4" r="4"/><circle cx="15" cy="8" r="4"/><circle cx="10" cy="9" r="4"/></g><path fill="#333" d="M7 7h2v2H7zM12 7h2v2h-2z"/><path fill="#e05050" d="M9 11h3v2H9z"/></svg></button>
    <button class="run" aria-label="Chrome"><svg width="22" height="22" viewBox="-11 -11 22 22"><circle r="10.500" fill="#f8cc30"/><path fill="#dc4438" d="M0-5H9.500A10.500 10.500 0 0 0-9.300-5L-4.500 2.500 0-5z"/><path fill="#30a052" d="M-9.300-5A10.500 10.500 0 0 0-1 10.500L4 3-4.500 2.500z"/><circle r="5" fill="#fff"/><circle r="4" fill="#4488f0"/></svg></button>
    <button class="run" aria-label="Notepad"><svg width="22" height="24" viewBox="0 0 22 24"><path fill="#eef4e8" stroke="#888" stroke-width=".6" d="M1 2h17v21H1z"/><path fill="#70b838" d="M2 16l15-3v9H2z"/><path stroke="#555" stroke-dasharray="1 1" d="M2 2.500h15"/><path stroke="#222" stroke-width="1.500" d="M6 8v8M6 8h3M10 10h2M13 10h2"/><path stroke="#d8a428" stroke-width="2.500" d="M20 2l-5 14"/></svg></button>
    <button class="run active" aria-label="AutoCAD"><svg width="24" height="24" viewBox="0 0 24 24"><path fill="url(#tile)" d="M0 0h24v24H0z"/><svg x="4" y="3" width="16" height="17"><use href="#amark"/></svg></svg></button>
    <button class="run" aria-label="Word"><svg width="24" height="22" viewBox="0 0 24 22"><path fill="#fff" stroke="#2b579a" d="M11.500 2.500h11v17h-11z"/><path stroke="#2b579a" d="M13 5.500h8M13 8.500h8M13 11.500h8M13 14.500h8"/><path fill="#2b579a" d="M1 3l13-3v22L1 19z"/><path fill="none" stroke="#fff" stroke-width="1.500" d="M3.500 7.500L5.500 14 7.500 8l2 6 2-7"/></svg></button>
  </div>
  <div class="tray">
    <svg width="12" height="8" viewBox="0 0 12 8"><path fill="none" stroke="#fff" stroke-width="1.300" d="M1 7l5-5 5 5"/></svg>
    <svg width="18" height="14" viewBox="0 0 18 14"><path fill="none" stroke="#fff" d="M5.500 4.500h10v7h-10zM16.500 6.500v3M1.500 3v3h4V3zM3.500 6v5H5M2.500 1v2M4.500 1v2"/><path fill="#fff" d="M7 6h5v4H7z"/></svg>
    <svg width="17" height="14" viewBox="0 0 17 14"><path fill="none" stroke="#fff" d="M1 5h2l4-3v10L3 9H1zM9 5q1 2 0 4M11 3q3 4 0 8M13 1q5 6 0 12"/></svg>
    <svg width="17" height="14" viewBox="0 0 17 14"><path fill="none" stroke="#fff" d="M4.500 2.500h12v7h-12zM10.500 10v3M7 12.500h7M.5 1.500h4v3H.5zM2.500 5v8h3"/></svg>
    <button class="lang">POR</button>
    <button class="clock"><time>15:08</time><span>18/11/2016</span></button>
    <svg width="17" height="16" viewBox="0 0 17 16"><path fill="none" stroke="#fff" d="M.5.5h15v11H9l-3 3v-3H.5zM4 4.500h8M4 7.500h8"/></svg>
  </div>
</div>
<script src="mesh.js"></script>
</body>
</html>
```
FILE: styles.css
```css
* { box-sizing: border-box; }
body { margin: 0; min-height: 100vh; display: flex; flex-direction: column; background: #000; font: 12px "Open Sans", "Noto Sans", sans-serif; color: #eee; overflow: hidden; }
button { font: inherit; color: inherit; background: none; border: 0; padding: 0; margin: 0; display: flex; align-items: center; justify-content: center; flex: none; }
input, select { font: inherit; color: inherit; background: none; border: 0; padding: 0; margin: 0; outline: 0; min-width: 0; }
a { color: inherit; text-decoration: none; }
svg { display: block; flex: none; }
.defs { position: absolute; width: 0; height: 0; }

.arr { flex: none; width: 0; height: 0; border: 3px solid transparent; border-top: 3px solid #f4f4f4; border-bottom: 0; }
.arr.lg { border-width: 4px 4px 0; }
.arr.dark { border-width: 4px 4px 0; border-top-color: #333; }

.window { flex: 1; display: flex; flex-direction: column; margin: 0 9px 8px 0; border-left: 3px solid #5c5c5c; border-right: 1px solid #777; border-bottom: 1px solid #777; background: #535353; min-height: 0; }

.titlebar { position: relative; display: flex; height: 28px; background: #fff; padding-left: 41px; }
.appbtn { position: absolute; left: 0; top: 4px; z-index: 2; width: 41px; height: 41px; border: 1px solid #111; background: linear-gradient(#d4d4d4, #8c8c8c 50%, #a8a8a8); gap: 1px; }
.quick, .info { display: flex; margin-top: 4px; height: 24px; background: linear-gradient(#8a8a8a, #5a5a5a); border-top: 1px solid #4a4a4a; }
.quick { width: 213px; padding-left: 5px; }
.quick button { width: 24px; }
.quick .slim { width: 12px; }
.title { flex: 1; display: flex; justify-content: center; gap: 18px; margin: 0; font-size: 12px; font-weight: 400; line-height: 24px; color: #000; white-space: pre; }
.info { width: 444px; }
.info .tiny { width: 14px; }
.search { width: 180px; border: 1px solid #333; background: #6a6a6a; padding: 0 2px; font-style: italic; }
.search::placeholder { color: #c4c4c4; opacity: 1; }
.w24 { width: 24px; }
.signin { flex: 1; gap: 4px; padding: 0 4px; }
.signin .arr { margin-left: auto; }
.a360 { width: 34px; gap: 4px; }
.help { width: 42px; gap: 6px; border-left: 1px solid #888; margin-left: 6px; }
.winctl { display: flex; width: 164px; justify-content: flex-end; }
.winctl button { width: 46px; height: 23px; }

.tabs { display: flex; height: 21px; padding-left: 45px; background: #535353; border-top: 1px solid #333; border-bottom: 1px solid #333; color: #c8c8c8; line-height: 20px; }
.tabs a { padding: 0 9px 0 8px; white-space: nowrap; }
.tabs .on { background: linear-gradient(#6c6c6c, #5c5c5c); color: #fff; height: 20px; border: 1px solid #333; border-width: 1px 1px 0; line-height: 18px; margin-top: 1px; padding: 0 8px; margin-right: 2px; }
.minrib { margin-left: 22px; gap: 6px; }

.ribbon { display: flex; height: 99px; background: #474747; border-bottom: 1px solid #777; }
.panel { flex: none; display: flex; flex-direction: column; background: linear-gradient(#5e5e5e, #5a5a5a); border-right: 1px solid #404040; border-left: 1px solid #6a6a6a; }
.tools { flex: 1; display: flex; padding-top: 4px; }
.foot { height: 20px; padding-bottom: 2px; background: linear-gradient(#515151, #454545); gap: 7px; position: relative; color: #f4f4f4; }
.launch { position: absolute; right: 4px; bottom: 5px; }
.p-draw { width: 226px; }
.p-modify { width: 134px; }
.p-annot { width: 148px; }
.p-layers { width: 272px; }
.p-block { width: 80px; }
.p-props { width: 222px; }
.p-groups { width: 69px; }

.big { flex-direction: column; justify-content: flex-start; height: 72px; line-height: 15px; padding-top: 2px; }
.big svg, .glyph { margin-bottom: 4px; }
.big .arr { margin-top: 3px; }
.big.on { border: 1px solid #3a3a3a; background: linear-gradient(#828282, #6a6a6a); padding-top: 1px; }
.glyph { font: 36px "Liberation Sans", sans-serif; line-height: 32px; color: #eaeaea; }
.w42 { width: 42px; }
.w44 { width: 44px; }
.w48 { width: 48px; }
.w50 { width: 50px; }
.w60 { width: 60px; }
.col { display: flex; flex-direction: column; padding-left: 2px; width: 38px; }
.p-draw .col, .col.near { padding-left: 0; }
.col.narrow { width: 22px; padding: 0; }
.sm { height: 24px; justify-content: flex-start; padding-left: 1px; gap: 5px; }
.sm.sel { background: #5478b4; border: 1px solid #2c4474; height: 22px; width: 24px; }
.grid4 { display: grid; grid-template-columns: 29px 29px 41px 29px; grid-auto-rows: 24px; padding-left: 3px; }
.layercol { flex: 1; padding-right: 2px; }
.grid5 { display: grid; grid-template-columns: repeat(5, 24px); grid-auto-rows: 24px; margin-top: 2px; padding-left: 2px; }
.combo { display: flex; align-items: center; height: 22px; border: 1px solid #333; background: linear-gradient(#6c6c6c, #545454); gap: 5px; padding: 0 2px 0 5px; }
.combo.layer { padding-left: 4px; }
.combo select { flex: 1; appearance: none; }
.combos { flex: 1; display: flex; flex-direction: column; gap: 2px; padding-right: 2px; }
.swatch { width: 14px; height: 14px; background: #f0f; border: 1px solid #222; }
.layer .swatch { margin-left: 1px; }
.big-sw { width: 16px; height: 16px; margin: 0 5px 0 6px; border-color: #ddd; }
.rule { width: 60px; height: 1px; background: #fff; margin-left: 3px; }
.combos .combo:nth-child(n+2) { gap: 0; }
.tiny-col { width: 26px; padding: 0; }
.closed { flex-direction: column; justify-content: flex-start; width: 59px; margin: 1px; background: linear-gradient(#6a6a6a, #505050); border: 1px solid #3a3a3a; padding: 3px 0 6px; white-space: nowrap; }
.closed svg { margin-bottom: 2px; }
.closed .arr { margin-top: auto; }

.filetabs { display: flex; height: 29px; padding: 3px 0 0 19px; background: #383838; border-bottom: 4px solid #5c5c5c; color: #b4b4b4; }
.ftab { width: 127px; margin-right: -4px; justify-content: space-between; padding: 0 14px 0 12px; background: linear-gradient(#606060, #505050); clip-path: polygon(0 100%, 4px 85%, 8px 15%, 13px 0, calc(100% - 13px) 0, calc(100% - 8px) 15%, calc(100% - 4px) 85%, 100% 100%); }
.ftab.on { background: linear-gradient(#8a8a8a, #5c5c5c); color: #fff; width: 128px; }
.ftab span { flex: 1; text-align: left; }
.fplus { width: 22px; height: 15px; margin: 4px 0 0 8px; background: #5a5a5a; border-radius: 4px 10px 4px 8px; }

.canvas { position: relative; flex: 1; min-height: 0; background: #212830; overflow: hidden; }
.scene { position: absolute; inset: 0; width: 100%; height: 100%; }
.viewlabel { position: absolute; left: 3px; top: 5px; display: flex; line-height: 17px; color: #f0f0f0; }
.docctl { position: absolute; right: 10px; top: 9px; display: flex; gap: 8px; }
.cube { position: absolute; right: 6px; top: 53px; display: flex; flex-direction: column; align-items: center; gap: 9px; }
.wcs { width: 48px; height: 17px; border-radius: 4px; border: 1px solid #888c98; background: #a2a5b0; color: #555b68; gap: 4px; font-size: 11px; }
.navbar { position: absolute; right: 4px; top: 189px; background: #61666f; border-radius: 3px; box-shadow: 0 0 4px #151a20; }
.cmd { position: absolute; left: 276px; right: 277px; bottom: 0; height: 33px; display: flex; align-items: stretch; border: 1px solid #5c5f63; background: rgba(207, 208, 210, .9); }
.cmdgrip { width: 53px; display: flex; align-items: center; background: linear-gradient(#6c6c6c, #404040); }
.prompt { display: flex; align-items: center; padding: 0 7px 0 5px; }
.cmd input { flex: 1; font: italic 12px "DejaVu Sans Mono", monospace; }
.cmd input::placeholder { color: #6e7174; opacity: 1; }
.cmd button { width: 14px; }

.status { display: flex; justify-content: space-between; height: 29px; background: #383838; border-top: 1px solid #5c5c5c; }
.layouts { display: flex; padding-left: 11px; color: #b8b8b8; height: 18px; }
.ltab { width: 62px; margin-right: 1px; background: linear-gradient(#4c4c4c, #5e5e5e); clip-path: polygon(0 0, 100% 0, calc(100% - 7px) 90%, calc(100% - 10px) 100%, 10px 100%, 7px 90%); }
.ltab.on { background: linear-gradient(#5c5c5c, #8c8c8c); color: #fff; font-weight: 700; width: 60px; margin-right: 0; }
.ltab:nth-child(3) { width: 66px; }
.lplus { width: 24px; background: #555; border-radius: 4px 0 12px 6px; }
.sbar { display: flex; gap: 2px; padding: 1px 1px 1px; height: 28px; background: #535353; }
.box { display: flex; border: 1px solid #8a8a8a; background: #4e4e4e; }
.model { width: 48px; }
.ico { width: 23px; }
.drop { width: 17px; }
.div { border-left: 1px solid #8a8a8a; }
.glow { background: radial-gradient(#0c4a90, transparent 70%); }
.scale { width: 36px; gap: 3px; }

.taskbar { display: flex; justify-content: space-between; height: 39px; flex: none; font-size: 12px; }
.apps { display: flex; }
.apps button { width: 45px; margin: 0 2px; border-bottom: 2px solid transparent; }
.apps .start { width: 40px; margin: 0; padding-right: 8px; }
.apps .t48 { width: 48px; margin: 0; }
.apps .last { margin-right: 2px; }
.apps .run { border-bottom-color: #76b0dc; width: 41px; margin: 0 4px; }
.apps .active { background: #333; width: 47px; margin: 0 1px; }
.tray { display: flex; align-items: center; gap: 8px; padding-right: 24px; }
.clock { flex-direction: column; line-height: 18px; margin: 0 2px 0 4px; }
```
FILE: mesh.js
```js
// Paraboloid of revolution: rings are projected ellipses sliding along the axis.
const apex = { x: 804, y: 405 };
const rim = { x: 915, y: 356, rx: 58, ry: 91, skew: 61 * Math.PI / 180 };
const RINGS = 34;
const RIBS = 24;

function point(s, a) {
  const h = s * s;
  return [
    apex.x + (rim.x - apex.x) * h + rim.rx * s * Math.cos(a),
    apex.y + (rim.y - apex.y) * h + rim.ry * s * Math.cos(a - rim.skew)
  ];
}

function path(points, attrs, close) {
  const el = document.createElementNS("http://www.w3.org/2000/svg", "path");
  const d = points.map((p, i) => (i ? "L" : "M") + p[0].toFixed(1) + " " + p[1].toFixed(1)).join("");
  el.setAttribute("d", d + (close ? "Z" : ""));
  for (const key in attrs) el.setAttribute(key, attrs[key]);
  document.getElementById("mesh").appendChild(el);
}

const angle = k => (k * 360 / RIBS - 4) * Math.PI / 180;
const ring = s => Array.from({ length: RIBS }, (_, k) => point(s, angle(k)));

for (let i = 1; i <= RINGS; i++) path(ring(i / RINGS), { fill: "#8a0c8c" }, true);
path(ring(1), { fill: "url(#rimFill)" }, true);

// near half fades from white at the silhouette to violet at the open edge
for (let pass = 0; pass < 2; pass++) {
  const near = pass === 0;
  const style = near ? { stroke: "url(#nearLine)", "stroke-opacity": ".75" } : { stroke: "#fff" };
  const from = near ? 7 : -7;
  const to = near ? 17 : 7;
  for (let i = 1; i <= RINGS; i++) {
    const pts = [];
    for (let k = from; k <= to; k++) pts.push(point(i / RINGS, angle(k)));
    path(pts, style, false);
  }
  for (let k = from; k < to; k++) {
    const pts = [];
    for (let i = 0; i <= RINGS; i++) pts.push(point(i / RINGS, angle(k)));
    path(pts, style, false);
  }
}

// bright outline where the surface turns away from the viewer
const edge = [];
for (let i = 1; i <= RINGS; i++) {
  const left = ring(i / RINGS).reduce((best, p) => (p[1] + p[0] < best[1] + best[0] ? p : best));
  edge.push(left);
}
path(edge, { stroke: "#fff" }, false);
```
